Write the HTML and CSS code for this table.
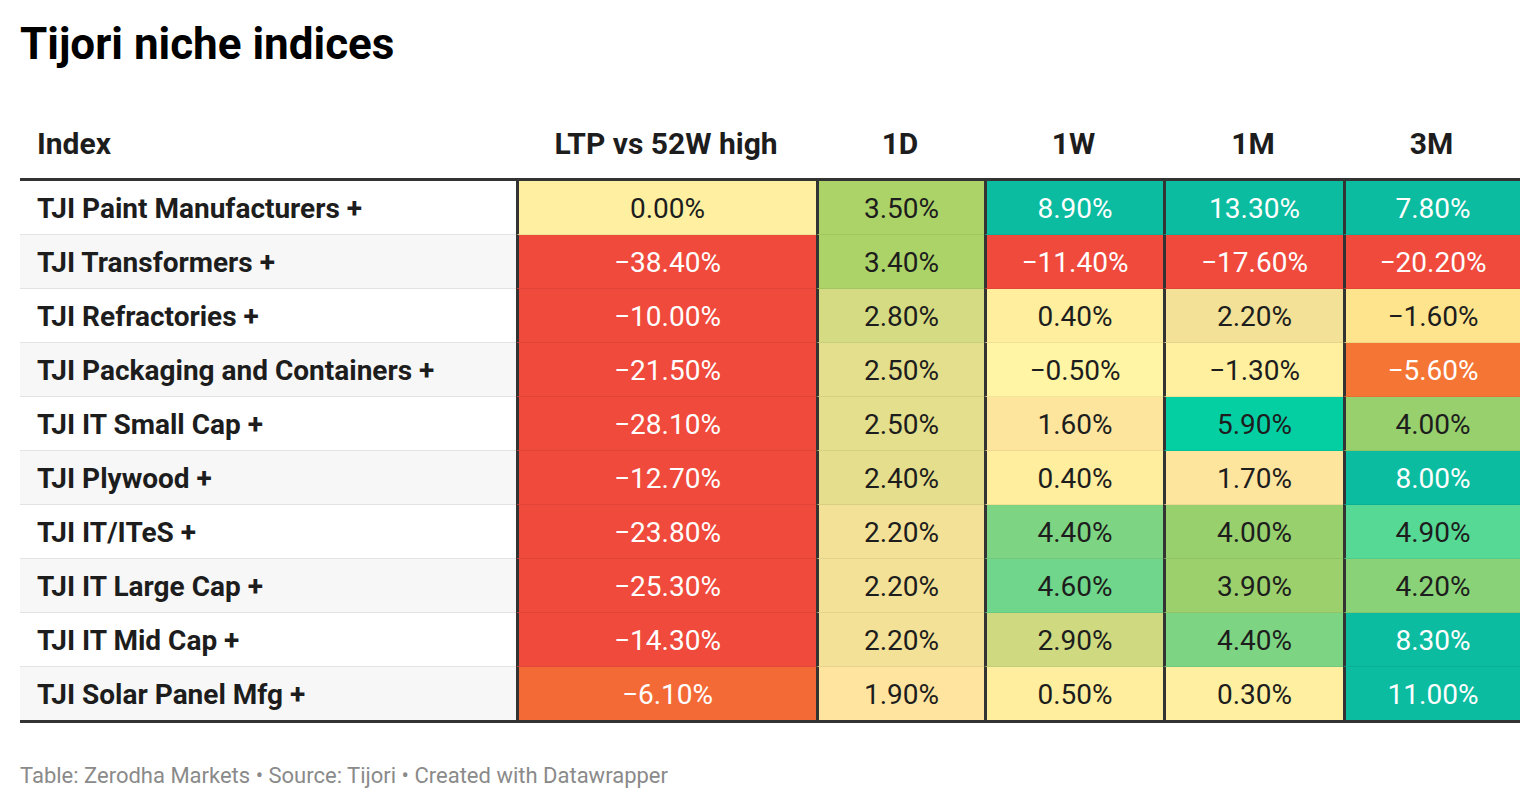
FILE: index.html
```html
<!DOCTYPE html>
<html lang="en">
<head>
<meta charset="utf-8">
<title>Tijori niche indices</title>
<link rel="stylesheet" href="styles.css">
</head>
<body>
<div class="chart">
  <h1 class="title">Tijori niche indices</h1>
  <div class="table">
    <div class="row head">
      <div class="cell label">Index</div>
      <div class="cell">LTP vs 52W high</div>
      <div class="cell">1D</div>
      <div class="cell">1W</div>
      <div class="cell">1M</div>
      <div class="cell">3M</div>
    </div>
    <div class="row">
      <div class="cell label">TJI Paint Manufacturers +</div>
      <div class="cell v y0">0.00%</div>
      <div class="cell v g35">3.50%</div>
      <div class="cell v teal w">8.90%</div>
      <div class="cell v teal w">13.30%</div>
      <div class="cell v teal w">7.80%</div>
    </div>
    <div class="row alt">
      <div class="cell label">TJI Transformers +</div>
      <div class="cell v red w">−38.40%</div>
      <div class="cell v g35">3.40%</div>
      <div class="cell v red w">−11.40%</div>
      <div class="cell v red w">−17.60%</div>
      <div class="cell v red w">−20.20%</div>
    </div>
    <div class="row">
      <div class="cell label">TJI Refractories +</div>
      <div class="cell v red w">−10.00%</div>
      <div class="cell v g28">2.80%</div>
      <div class="cell v y04">0.40%</div>
      <div class="cell v g22">2.20%</div>
      <div class="cell v yn16">−1.60%</div>
    </div>
    <div class="row alt">
      <div class="cell label">TJI Packaging and Containers +</div>
      <div class="cell v red w">−21.50%</div>
      <div class="cell v g25">2.50%</div>
      <div class="cell v yn05">−0.50%</div>
      <div class="cell v yn13">−1.30%</div>
      <div class="cell v orange w">−5.60%</div>
    </div>
    <div class="row">
      <div class="cell label">TJI IT Small Cap +</div>
      <div class="cell v red w">−28.10%</div>
      <div class="cell v g25">2.50%</div>
      <div class="cell v y16">1.60%</div>
      <div class="cell v mint">5.90%</div>
      <div class="cell v g40">4.00%</div>
    </div>
    <div class="row alt">
      <div class="cell label">TJI Plywood +</div>
      <div class="cell v red w">−12.70%</div>
      <div class="cell v g24">2.40%</div>
      <div class="cell v y04">0.40%</div>
      <div class="cell v y16">1.70%</div>
      <div class="cell v teal w">8.00%</div>
    </div>
    <div class="row">
      <div class="cell label">TJI IT/ITeS +</div>
      <div class="cell v red w">−23.80%</div>
      <div class="cell v g22">2.20%</div>
      <div class="cell v g44">4.40%</div>
      <div class="cell v g40">4.00%</div>
      <div class="cell v g49">4.90%</div>
    </div>
    <div class="row alt">
      <div class="cell label">TJI IT Large Cap +</div>
      <div class="cell v red w">−25.30%</div>
      <div class="cell v g22">2.20%</div>
      <div class="cell v g46">4.60%</div>
      <div class="cell v g39">3.90%</div>
      <div class="cell v g42">4.20%</div>
    </div>
    <div class="row">
      <div class="cell label">TJI IT Mid Cap +</div>
      <div class="cell v red w">−14.30%</div>
      <div class="cell v g22">2.20%</div>
      <div class="cell v g29">2.90%</div>
      <div class="cell v g44">4.40%</div>
      <div class="cell v teal w">8.30%</div>
    </div>
    <div class="row alt last">
      <div class="cell label">TJI Solar Panel Mfg +</div>
      <div class="cell v orange2 w">−6.10%</div>
      <div class="cell v y19">1.90%</div>
      <div class="cell v y04">0.50%</div>
      <div class="cell v y0">0.30%</div>
      <div class="cell v teal w">11.00%</div>
    </div>
  </div>
  <p class="footer">Table: Zerodha Markets • Source: Tijori • Created with Datawrapper</p>
</div>
</body>
</html>
```
FILE: styles.css
```css
html, body {
  margin: 0;
  padding: 0;
  background: #ffffff;
}

body {
  font-family: Roboto, "Liberation Sans", sans-serif;
  color: #1d1d1d;
}

.chart {
  padding: 18px 20px 0 20px;
  width: 1500px;
}

.title {
  margin: 0;
  font-size: 44px;
  line-height: 52px;
  font-weight: 700;
  color: #000;
}

.table {
  margin-top: 37px;
  border-bottom: 3px solid #333;
}

.row {
  display: grid;
  grid-template-columns: 496px 300px 168px 179px 180px 177px;
  height: 54px;
}

.row .cell {
  display: flex;
  align-items: center;
  justify-content: center;
  font-size: 28px;
  box-sizing: border-box;
  padding-top: 2px;
  border-bottom: 1px solid rgba(0, 0, 0, 0.06);
  white-space: nowrap;
}

.row .cell.label {
  justify-content: flex-start;
  padding-left: 17px;
  font-weight: 700;
  color: #1d1d1d;
  background: #ffffff;
  border-bottom-color: #e3e3e3;
}

.row.alt .cell.label {
  background: #f7f7f7;
}

.row .cell.v {
  border-left: 3px solid #333;
  color: #1d1d1d;
}

.row .cell.w {
  color: #ffffff;
}

.row.last .cell {
  border-bottom: none;
  height: 53px;
}

.row.last {
  height: 53px;
}

.row.head {
  height: 71px;
  border-bottom: 3px solid #333;
}

.row.head .cell {
  border-bottom: none;
  font-size: 30px;
  font-weight: 700;
  padding-top: 2px;
  color: #1d1d1d;
}

.row.head .cell.label {
  background: transparent;
}

/* heat scale */
.red { background: #ef4a3c; }
.orange { background: #f57535; }
.orange2 { background: #f46a37; }
.teal { background: #0bbca0; }
.mint { background: #04cfa3; }
.y0 { background: #fef0a0; }
.y04 { background: #feee9d; }
.yn05 { background: #fff5a4; }
.yn13 { background: #fff09f; }
.yn16 { background: #fee48d; }
.y16 { background: #fee59e; }
.y19 { background: #fee49f; }
.g22 { background: #f2e196; }
.g24 { background: #e5de8c; }
.g25 { background: #e3df8c; }
.g28 { background: #d5db82; }
.g29 { background: #cfda80; }
.g35 { background: #acd368; }
.g39 { background: #9cd06c; }
.g40 { background: #97d06d; }
.g42 { background: #8ad277; }
.g44 { background: #7dd583; }
.g46 { background: #6fd68b; }
.g49 { background: #57d996; }

.footer {
  margin: 40px 0 0 0;
  font-size: 22px;
  line-height: 26px;
  color: #8a8a8a;
}
```
